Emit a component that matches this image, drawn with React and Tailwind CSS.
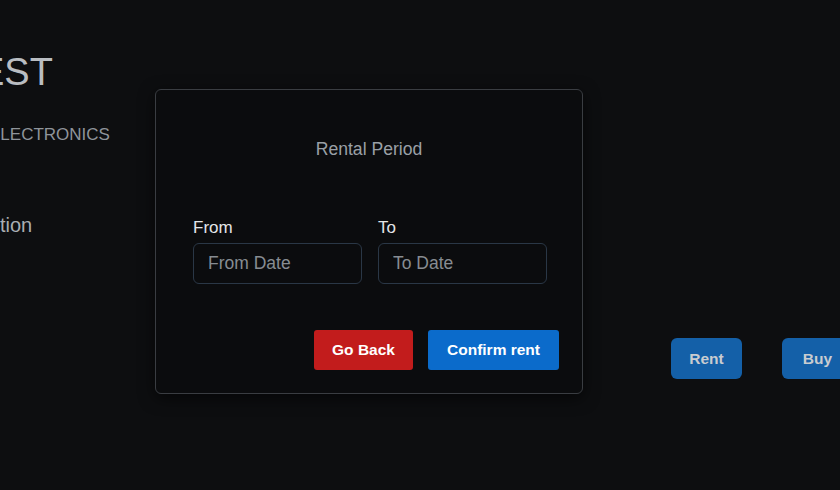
export default function App() {
  return (
    <div
      className="relative w-[840px] h-[490px] overflow-hidden bg-[#0d0e10]"
      style={{ fontFamily: '"Liberation Sans", Arial, sans-serif' }}
    >
      {/* page behind the dialog, dimmed */}
      <div className="flex flex-col pt-[48px]">
        <h1 className="ml-[-21px] text-[38px] leading-[48px] text-[#b9bdc2] whitespace-nowrap">EST</h1>
        <p className="ml-[-11px] mt-[27px] text-[17px] leading-[24px] text-[#8f949a] whitespace-nowrap">ELECTRONICS</p>
        <p className="ml-0 mt-[64px] text-[20px] leading-[28px] text-[#a9adb2] whitespace-nowrap">tion</p>
        <div className="flex gap-[40px] ml-[671px] mt-[99px]">
          <button className="shrink-0 w-[71px] h-[41px] rounded-md bg-[#1460a8] text-[#c9ccd0] text-[15.5px] font-bold">Rent</button>
          <button className="shrink-0 w-[71px] h-[41px] rounded-md bg-[#1460a8] text-[#c9ccd0] text-[15.5px] font-bold">Buy</button>
        </div>
      </div>

      {/* rental dialog */}
      <div className="absolute left-[155px] top-[89px] w-[428px] h-[305px] rounded-md border border-[#3a3d42] bg-[#0b0c0e] shadow-[0_4px_16px_rgba(0,0,0,0.6)] flex flex-col">
        <h2 className="mt-[47px] text-center text-[17.6px] leading-[24px] text-[#9aa0a6]">Rental Period</h2>
        <div className="flex gap-[16px] px-[37px] mt-[55px]">
          <label className="flex flex-col w-[169px]">
            <span className="text-[17px] leading-[24px] text-[#e4e6e8]">From</span>
            <input
              placeholder="From Date"
              className="mt-[3px] h-[41px] px-[14px] rounded-md border border-[#2a3746] bg-transparent text-[17.5px] text-[#e4e6e8] placeholder:text-[#878c92] outline-none"
            />
          </label>
          <label className="flex flex-col w-[169px]">
            <span className="text-[17px] leading-[24px] text-[#e4e6e8]">To</span>
            <input
              placeholder="To Date"
              className="mt-[3px] h-[41px] px-[14px] rounded-md border border-[#2a3746] bg-transparent text-[17.5px] text-[#e4e6e8] placeholder:text-[#878c92] outline-none"
            />
          </label>
        </div>
        <div className="flex justify-end gap-[15px] pr-[23px] mt-[46px]">
          <button className="w-[99px] h-[40px] rounded-[3px] bg-[#c21c1c] text-white text-[15.5px] font-bold">Go Back</button>
          <button className="w-[131px] h-[40px] rounded-[3px] bg-[#0b6bcb] text-white text-[15.5px] font-bold">Confirm rent</button>
        </div>
      </div>
    </div>
  );
}
